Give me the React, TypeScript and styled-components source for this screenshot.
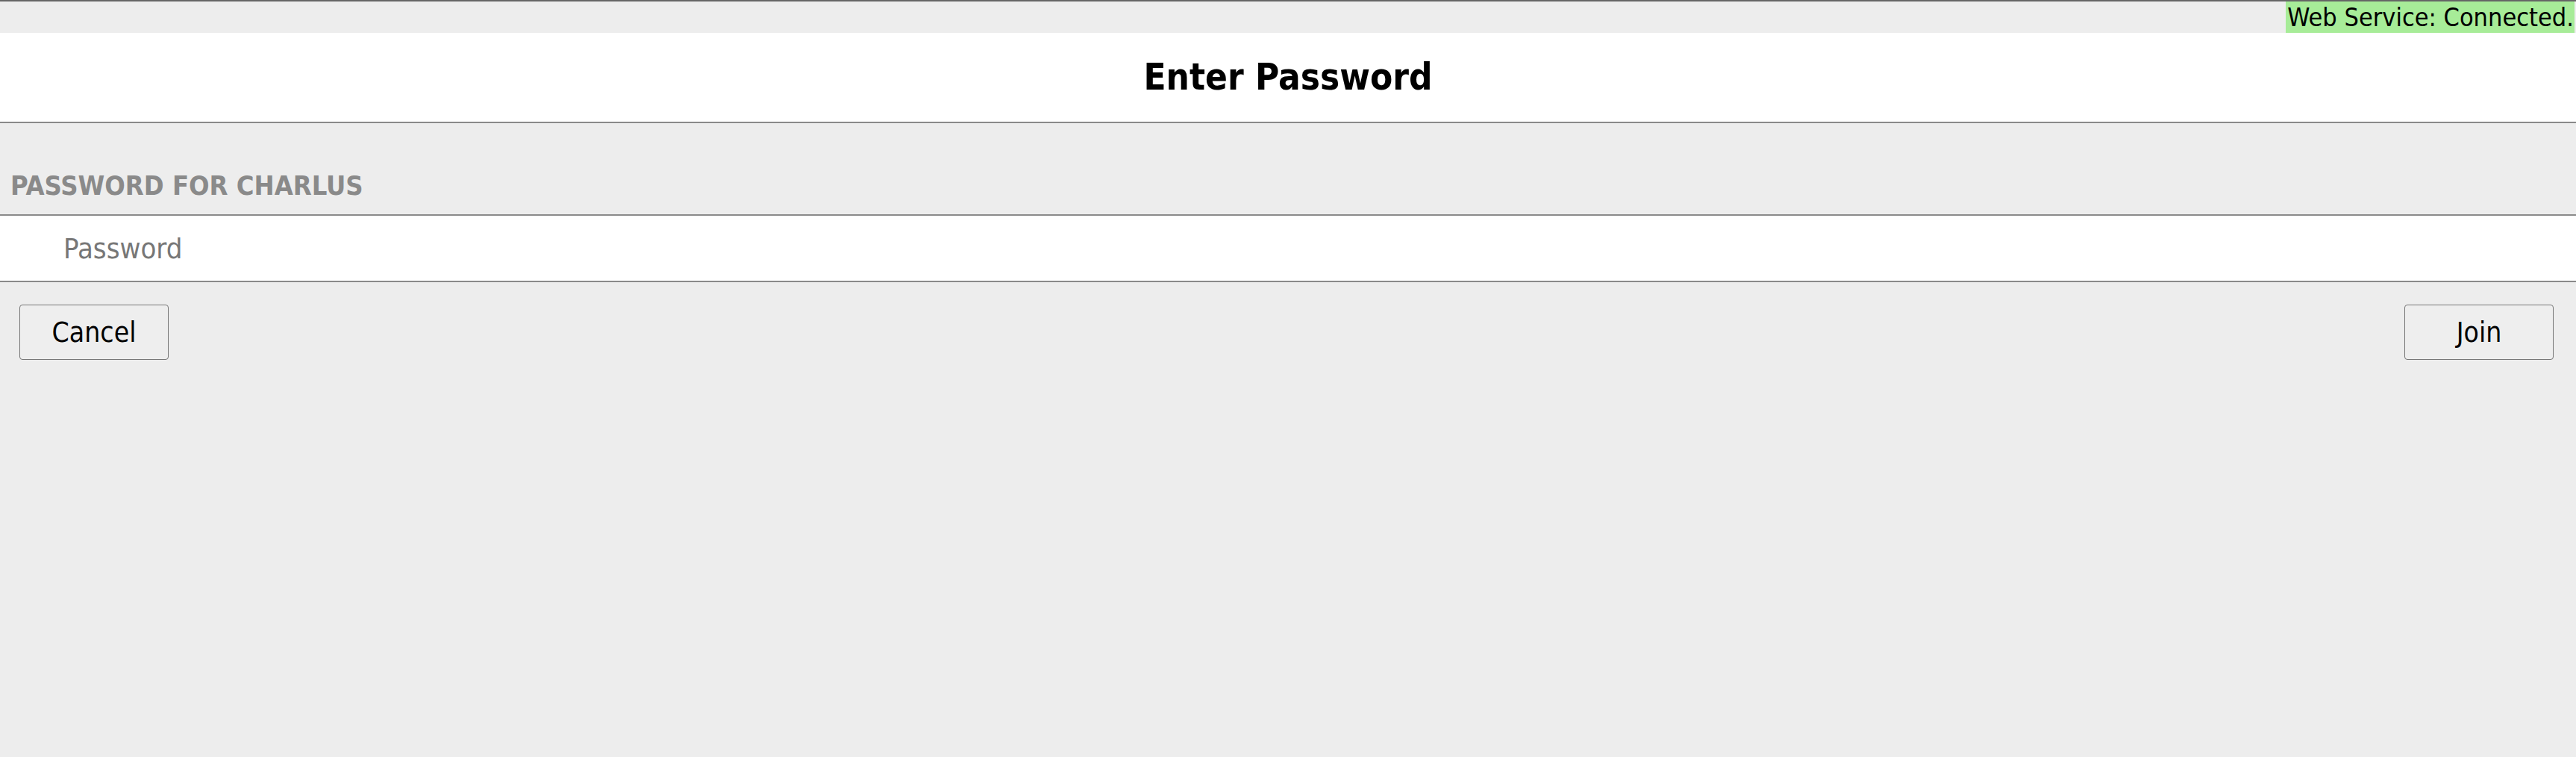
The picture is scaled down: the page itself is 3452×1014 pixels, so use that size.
import React from "react";
import styled, { createGlobalStyle } from "styled-components";

const GlobalStyle = createGlobalStyle`
  html, body {
    margin: 0;
    padding: 0;
    background: #ededed;
  }
  body {
    font-family: "DejaVu Sans Condensed", "DejaVu Sans", sans-serif;
    font-stretch: condensed;
  }
  #root {
    min-height: 100vh;
  }
`;

const Page = styled.div`
  min-height: 100vh;
  display: flex;
  flex-direction: column;
  background: #ededed;
  border-top: 2px solid #666666;
  box-sizing: border-box;
`;

const StatusBar = styled.div`
  height: 42px;
  display: flex;
  justify-content: flex-end;
  align-items: stretch;
  padding-right: 2px;
`;

const StatusBadge = styled.div`
  background: #a7ec98;
  color: #000;
  font-size: 34px;
  line-height: 42px;
  padding: 0 1px 0 2px;
  white-space: nowrap;
`;

const Header = styled.header`
  height: 119px;
  background: #ffffff;
  border-bottom: 2px solid #8a8a8a;
  display: flex;
  align-items: center;
  justify-content: center;
`;

const Title = styled.h1`
  margin: 0;
  font-size: 49px;
  font-weight: bold;
  color: #000;
  line-height: 1;
`;

const SectionLabel = styled.div`
  height: 122px;
  box-sizing: border-box;
  display: flex;
  align-items: flex-end;
  padding: 0 0 20px 14px;
  font-size: 36px;
  font-weight: bold;
  color: #8a8a8a;
  text-transform: uppercase;
  line-height: 1;
`;

const FieldRow = styled.div`
  height: 87px;
  background: #ffffff;
  border-top: 2px solid #8a8a8a;
  border-bottom: 2px solid #8a8a8a;
  display: flex;
  align-items: center;
`;

const PasswordInput = styled.input`
  flex: 1;
  height: 100%;
  border: none;
  outline: none;
  background: transparent;
  padding: 0 0 0 85px;
  font-family: inherit;
  font-stretch: condensed;
  font-size: 38px;
  color: #000;
  &::placeholder {
    color: #777777;
  }
`;

const ButtonRow = styled.div`
  display: flex;
  justify-content: space-between;
  padding: 30px 30px 0 26px;
`;

const Button = styled.button`
  width: 200px;
  height: 74px;
  box-sizing: border-box;
  background: #eeeeee;
  border: 1.5px solid #777777;
  border-radius: 4px;
  font-family: inherit;
  font-stretch: condensed;
  font-size: 37px;
  color: #000;
  padding: 0;
  cursor: pointer;
`;

export default function App() {
  return (
    <>
      <GlobalStyle />
      <Page>
        <StatusBar>
          <StatusBadge>Web Service: Connected.</StatusBadge>
        </StatusBar>
        <Header>
          <Title>Enter Password</Title>
        </Header>
        <SectionLabel>Password for Charlus</SectionLabel>
        <FieldRow>
          <PasswordInput type="password" placeholder="Password" />
        </FieldRow>
        <ButtonRow>
          <Button>Cancel</Button>
          <Button>Join</Button>
        </ButtonRow>
      </Page>
    </>
  );
}
